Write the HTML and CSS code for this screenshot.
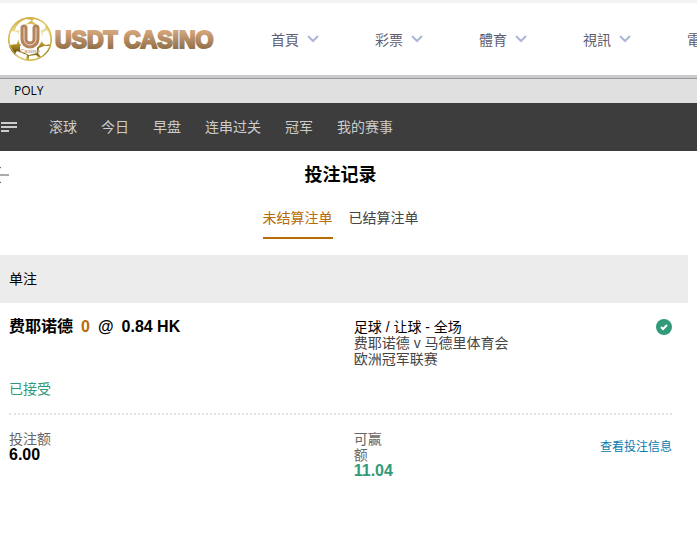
FILE: index.html
```html
<!DOCTYPE html>
<html lang="zh-CN">
<head>
    <meta charset="UTF-8">
    <meta name="viewport" content="width=device-width, initial-scale=1.0">
    <title>投注记录</title>
    <link rel="stylesheet" href="styles.css">
</head>
<body>

    <header class="site-header">
        <a class="logo" href="#" aria-label="USDT CASINO">
            <svg width="210" height="48" viewBox="0 0 210 48">
                <defs>
                    <linearGradient id="gold" x1="0" y1="0" x2="0" y2="1">
                        <stop offset="0" stop-color="#c9a833"/>
                        <stop offset="0.35" stop-color="#efdf98"/>
                        <stop offset="0.6" stop-color="#c09a2e"/>
                        <stop offset="0.8" stop-color="#6e560f"/>
                        <stop offset="1" stop-color="#dcc44c"/>
                    </linearGradient>
                    <linearGradient id="bronze" x1="0" y1="0" x2="0" y2="1">
                        <stop offset="0.15" stop-color="#d5a67c"/>
                        <stop offset="0.8" stop-color="#96724a"/>
                    </linearGradient>
                </defs>
                <circle cx="23" cy="24" r="22" fill="url(#gold)"/>
                <g fill="#fff">
                    <path d="M9 12q4-6 10-8l6 1-7 5-4 5-6 1z"/>
                    <path d="M27 4q7 0 12 6l-1 4-5 2-4-7-4-3z"/>
                    <path d="M2 24q0-5 3-8l5 1 2 4-2 8-8 1z"/>
                    <path d="M36 17l4-2q4 6 4 14l-6 1-4-4z"/>
                    <path d="M13 31l17 0 0 7-8 2-9-4z"/>
                    <path d="M10 36l10 4-1 5q-7-1-11-6z"/>
                    <path d="M32 33l5-2 6 0q-3 7-9 11l-3-4z"/>
                    <path d="M22 41l7-1 3 3q-5 2-10 2z"/>
                    <ellipse cx="23" cy="22" rx="12" ry="13"/>
                </g>
                <circle cx="23" cy="24" r="21" fill="none" stroke="#d3b64a"/>
                <g fill="none" stroke-linecap="round">
                    <path d="M17 13v11a6 6 0 0 0 12 0v-11" stroke="#b5845f" stroke-width="7"/>
                    <path d="M17 13v11a6 6 0 0 0 12 0v-11" stroke="#f1dac6" stroke-width="1"/>
                </g>
                <text class="logo-small" x="23" y="38" text-anchor="middle">Casino</text>
                <text class="logo-text" x="48" y="33">USDT CASINO</text>
            </svg>
        </a>
        <nav class="main-nav">
            <a href="#">首頁 <svg class="chevron" viewBox="0 0 12 8"><path d="M1 1l5 5 5-5"/></svg></a>
            <a href="#">彩票 <svg class="chevron" viewBox="0 0 12 8"><path d="M1 1l5 5 5-5"/></svg></a>
            <a href="#">體育 <svg class="chevron" viewBox="0 0 12 8"><path d="M1 1l5 5 5-5"/></svg></a>
            <a href="#">視訊 <svg class="chevron" viewBox="0 0 12 8"><path d="M1 1l5 5 5-5"/></svg></a>
            <a href="#">電子 <svg class="chevron" viewBox="0 0 12 8"><path d="M1 1l5 5 5-5"/></svg></a>
        </nav>
    </header>

    <div class="provider">POLY</div>

    <nav class="sport-nav">
        <button class="menu-btn" aria-label="菜单">
            <svg width="16" height="10" viewBox="0 0 16 10"><path d="M0 0h16v2H0zM0 4h16v2H0zM0 8h8v2H0z"/></svg>
        </button>
        <a href="#">滚球</a>
        <a href="#">今日</a>
        <a href="#">早盘</a>
        <a href="#">连串过关</a>
        <a href="#">冠军</a>
        <a href="#">我的赛事</a>
    </nav>

    <main class="records">
        <div class="title-row">
            <button class="back-btn" aria-label="返回">
                <svg width="16" height="16" viewBox="0 0 16 16"><path d="M8 0L1 8l7 8" stroke="#666"/><path d="M1 8h15" stroke="#aaa" stroke-width="2"/></svg>
            </button>
            <h1>投注记录</h1>
        </div>

        <div class="tabs">
            <button class="tab active">未结算注单</button>
            <button class="tab">已结算注单</button>
        </div>

        <h2 class="bet-type">单注</h2>

        <section class="bet">
            <div class="bet-row bet-info">
                <p class="selection"><span>费耶诺德</span><span class="handicap">0</span><span>@</span><span>0.84 HK</span></p>
                <div class="match">
                    <p class="market">足球 / 让球 - 全场</p>
                    <p>费耶诺德 v 马德里体育会</p>
                    <p>欧洲冠军联赛</p>
                </div>
                <svg class="accepted-icon" viewBox="0 0 16 16"><circle cx="8" cy="8" r="8" fill="#329a7a"/><path d="M5 8l2 2 4-4" fill="none" stroke="#fff" stroke-width="2"/></svg>
            </div>
            <p class="status">已接受</p>
            <div class="bet-row bet-money">
                <div>
                    <p class="label">投注额</p>
                    <p class="amount">6.00</p>
                </div>
                <div>
                    <p class="label narrow">可赢额</p>
                    <p class="amount win">11.04</p>
                </div>
                <a class="details" href="#">查看投注信息</a>
            </div>
        </section>
    </main>

</body>
</html>
```
FILE: styles.css
```css
* {
    box-sizing: border-box;
}
body {
    margin: 0;
    background: #fff;
    color: #000;
    font-family: "Liberation Sans", "Noto Sans CJK SC", sans-serif;
    font-size: 14px;
    line-height: 16px;
    overflow-x: hidden;
}
h1, h2, p {
    margin: 0;
}
a {
    color: inherit;
    text-decoration: none;
}
button {
    background: none;
    border: none;
    padding: 0;
    font: inherit;
    color: inherit;
    cursor: pointer;
}
svg {
    display: block;
}

/* top header */
.site-header {
    display: flex;
    align-items: center;
    height: 78px;
    border-top: 3px solid #f2f2f2;
    border-bottom: 3px solid #c9cacc;
    overflow: hidden;
}
.logo {
    flex: none;
    padding-left: 7px;
}
.logo-text {
    font: bold 23px "Liberation Sans", sans-serif;
    fill: url(#bronze);
    stroke: url(#bronze);
    stroke-width: 2px;
}
.logo-small {
    font: bold 6px "Liberation Sans", sans-serif;
    fill: #c9a384;
}
.main-nav {
    display: flex;
    gap: 56px;
    padding-left: 54px;
    color: #5f5b70;
    font-family: "Noto Sans CJK TC", sans-serif;
}
.main-nav a {
    display: flex;
    align-items: center;
    gap: 8px;
    flex: none;
    white-space: nowrap;
}
.chevron {
    width: 12px;
    height: 8px;
    fill: none;
    stroke: #aab8d6;
    stroke-width: 2;
}
.provider {
    height: 25px;
    padding-left: 14px;
    border-top: 1px solid #999b9f;
    background: #e0e0e0;
    font: 12px/24px "Open Sans", sans-serif;
}

/* sport menu */
.sport-nav {
    display: flex;
    align-items: center;
    gap: 24px;
    height: 48px;
    padding-left: 1px;
    background: #3d3d3d;
    color: #ccc;
}
.menu-btn {
    margin-right: 8px;
    fill: #ccc;
}

/* bet records */
.records {
    margin: 0 9px 0 -7px;
}
.title-row {
    display: grid;
    grid-template-columns: 1fr auto 1fr;
    align-items: center;
    height: 48px;
}
.title-row h1 {
    font-size: 18px;
    line-height: 24px;
}
.back-btn {
    justify-self: start;
    fill: none;
}
.tabs {
    display: flex;
    justify-content: center;
    gap: 16px;
    margin-bottom: 16px;
}
.tab {
    height: 40px;
    border-bottom: 2px solid transparent;
    color: #444;
}
.tab.active {
    color: #b86b05;
    border-color: #b86b05;
}
.bet-type {
    padding: 0 16px;
    background: #ececec;
    font-size: 14px;
    font-weight: normal;
    line-height: 48px;
}
.bet {
    padding: 16px;
}
.bet-row {
    display: grid;
    grid-template-columns: 52% 1fr auto;
}
.selection {
    display: flex;
    gap: 8px;
    font-size: 16px;
    font-weight: bold;
}
.handicap {
    color: #b86b05;
}
.match {
    color: #444;
}
.market {
    color: #000;
}
.accepted-icon {
    width: 16px;
    height: 16px;
}
.status {
    padding: 14px 0 16px;
    color: #329a7a;
}
.bet-money {
    padding-top: 16px;
    border-top: 2px dotted #e2e2e2;
}
.label {
    color: #666;
}
.narrow {
    width: 40px;
}
.amount {
    font-size: 16px;
    font-weight: bold;
}
.win {
    color: #329a7a;
}
.details {
    padding-top: 8px;
    color: #0b7bab;
    font-size: 12px;
}
```
